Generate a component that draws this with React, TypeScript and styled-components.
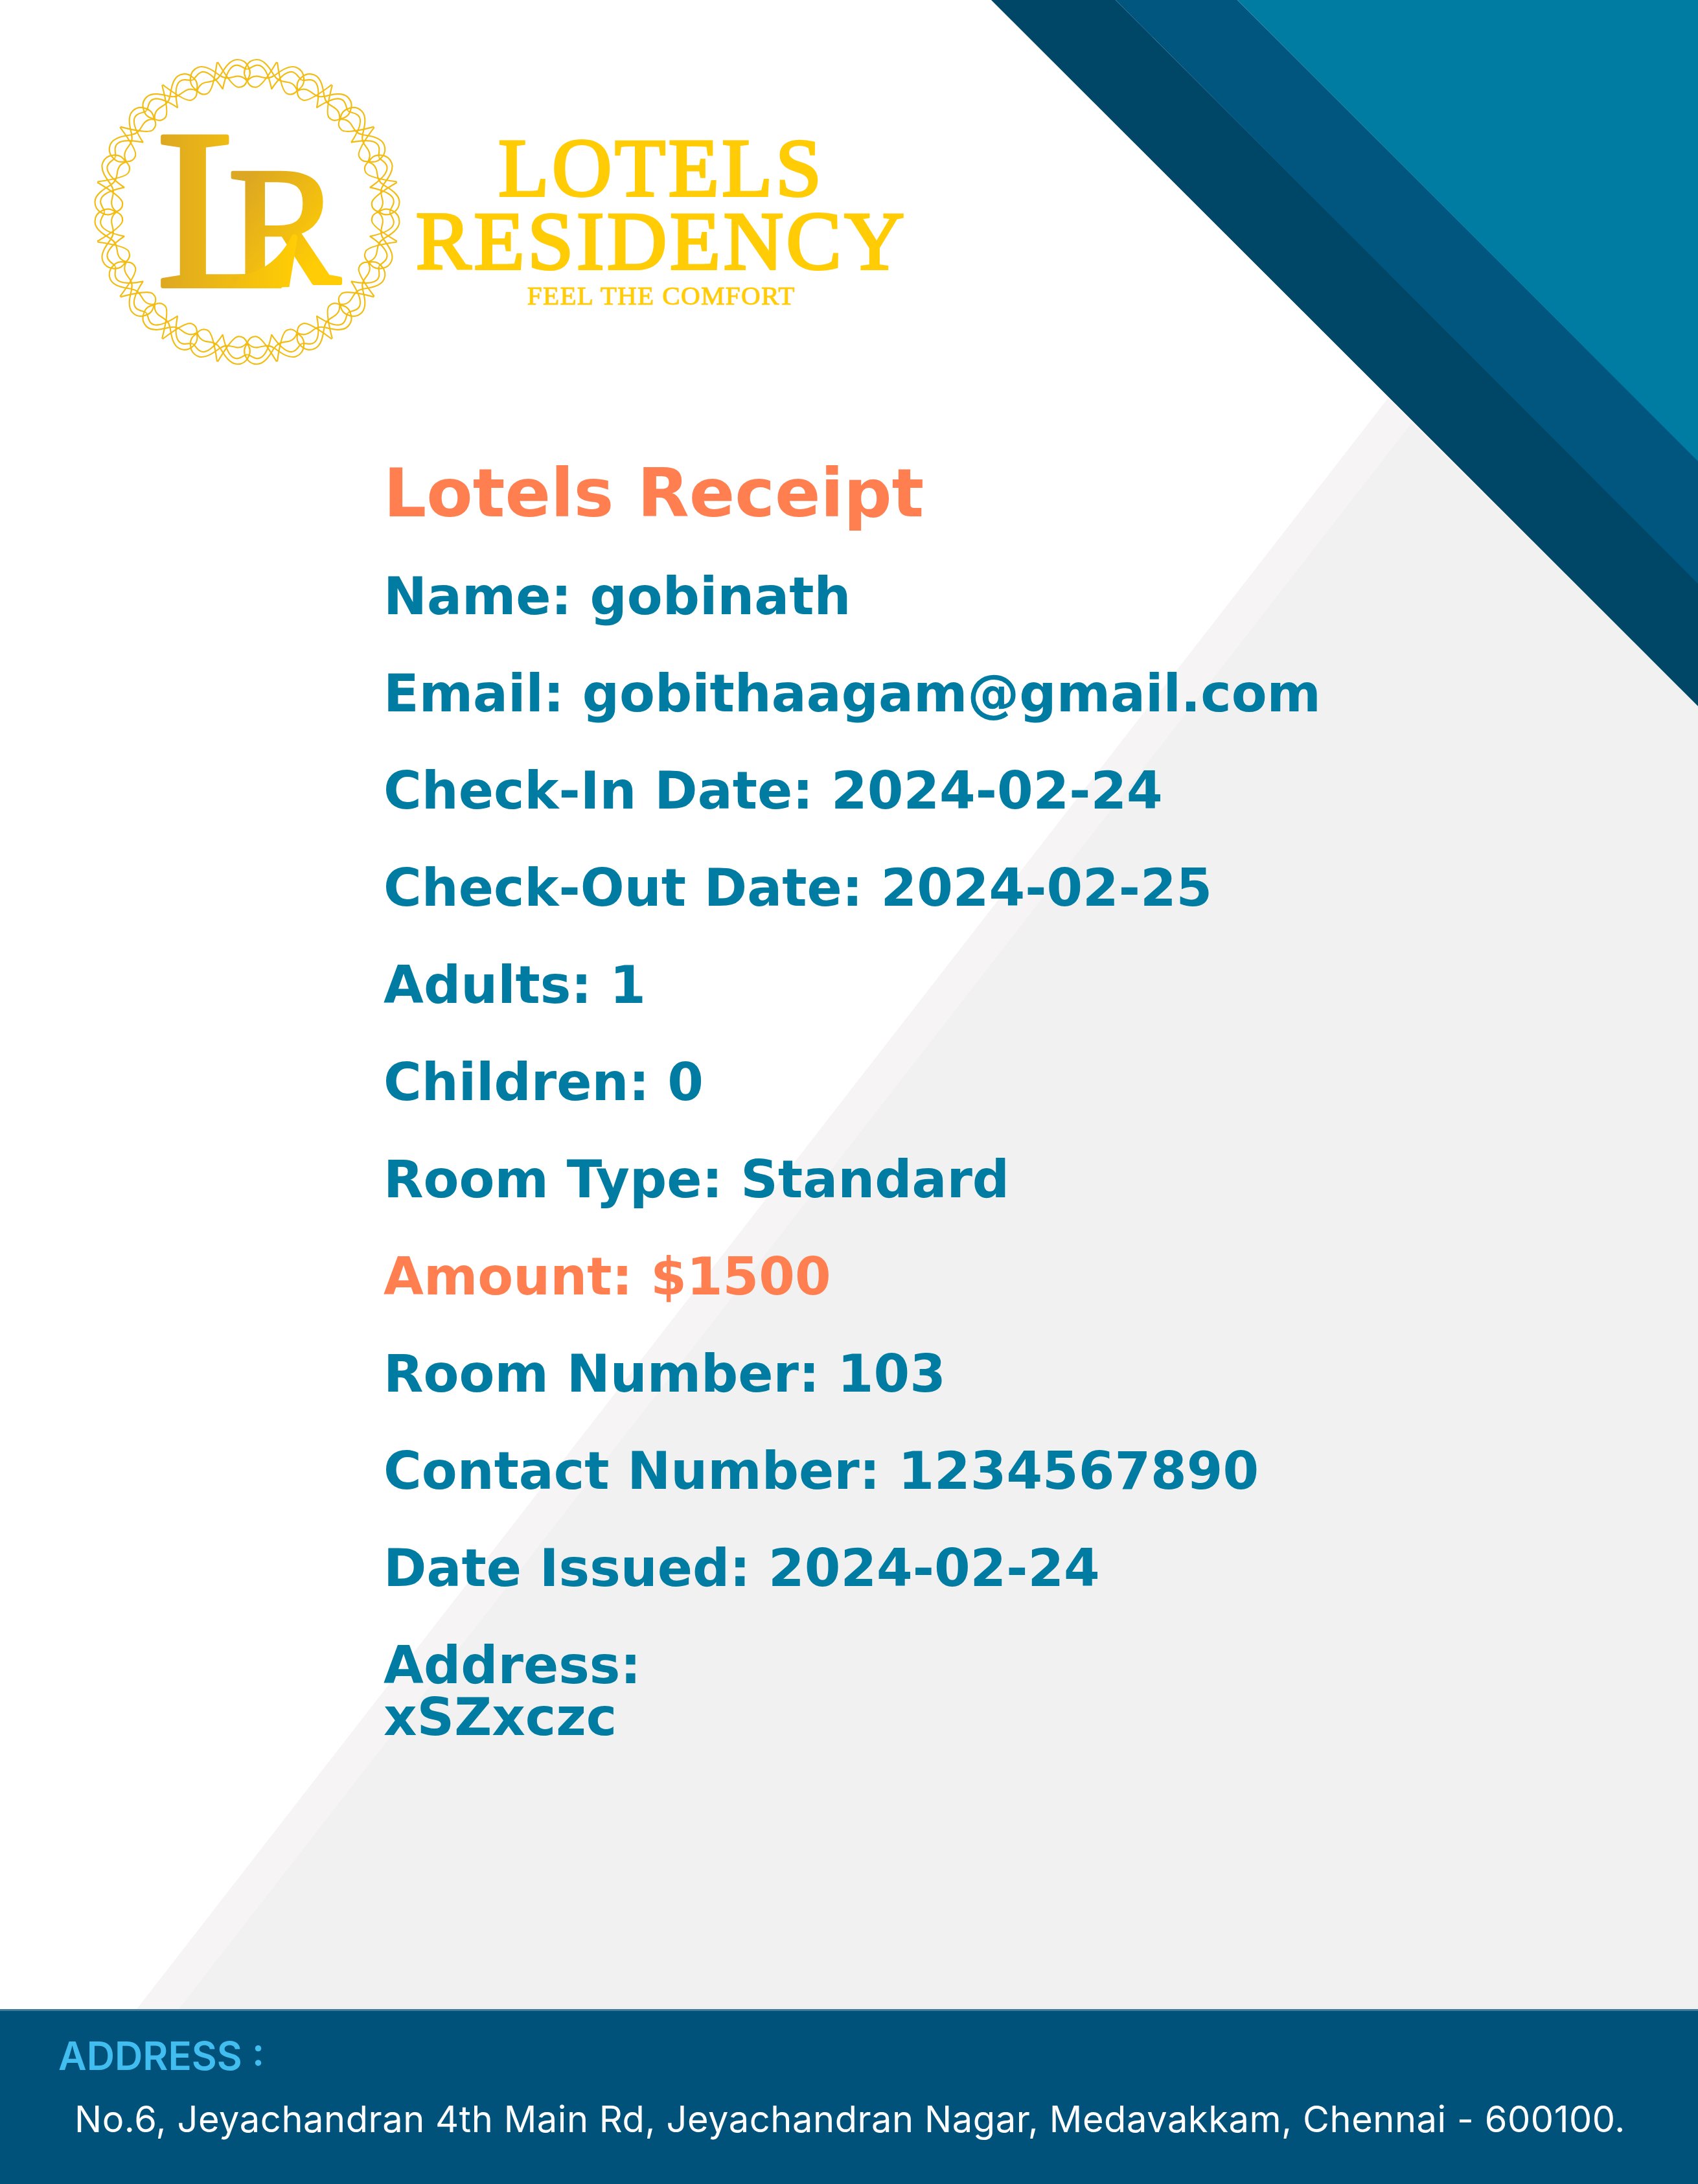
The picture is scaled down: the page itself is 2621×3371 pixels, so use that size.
import React from "react";
import styled, { createGlobalStyle } from "styled-components";

const GlobalStyle = createGlobalStyle`
  html, body {
    margin: 0;
    padding: 0;
    background: #fff;
  }
`;

const Page = styled.div`
  position: relative;
  width: 2621px;
  height: 3371px;
  overflow: hidden;
  display: flex;
  flex-direction: column;
  background: #fff;
`;

const Backdrop = styled.svg`
  position: absolute;
  top: 0;
  left: 0;
`;

const Header = styled.header`
  position: relative;
  display: flex;
  align-items: flex-start;
  gap: 20px;
  padding: 87px 0 0 141px;
`;

const Wordmark = styled.div`
  width: 758px;
  margin-top: 116px;
  display: flex;
  flex-direction: column;
  align-items: center;
  color: #ffcc05;
  font-family: "Liberation Serif", serif;
`;

const WordmarkLine = styled.div`
  font-size: 128px;
  line-height: 113px;
  letter-spacing: 4.5px;
  -webkit-text-stroke: 4px #ffcc05;
`;

const Tagline = styled.div`
  font-size: 41px;
  line-height: 54px;
  letter-spacing: 1.4px;
  -webkit-text-stroke: 1px #ffcc05;
`;

const Receipt = styled.main`
  position: relative;
  margin: 134px 0 0 592px;
  display: flex;
  flex-direction: column;
  gap: 70px;
  font-family: "DejaVu Sans", sans-serif;
  font-weight: 700;
`;

const Title = styled.h1`
  margin: 0 0 -10px;
  font-size: 104px;
  line-height: 120px;
  color: #ff7f50;
`;

const Row = styled.p<{ $accent?: boolean }>`
  margin: 0;
  font-size: 80px;
  line-height: 80px;
  color: ${(p) => (p.$accent ? "#ff7f50" : "#007ba1")};
`;

const Footer = styled.footer`
  position: relative;
  margin-top: auto;
  height: 270px;
  box-sizing: border-box;
  border-top: 3px solid #3f7a98;
  background: #00527a;
  font-family: Inter, sans-serif;
  padding: 34px 0 0 90px;
`;

const FooterLabel = styled.div`
  font-size: 60px;
  line-height: 70px;
  font-weight: 600;
  color: #41bdf0;
`;

const FooterText = styled.div`
  margin: 28px 0 0 25px;
  font-size: 56px;
  line-height: 70px;
  letter-spacing: 0.55px;
  color: #fff;
`;

const rows: { text: React.ReactNode; accent?: boolean }[] = [
  { text: "Name: gobinath" },
  { text: "Email: gobithaagam@gmail.com" },
  { text: "Check-In Date: 2024-02-24" },
  { text: "Check-Out Date: 2024-02-25" },
  { text: "Adults: 1" },
  { text: "Children: 0" },
  { text: "Room Type: Standard" },
  { text: "Amount: $1500", accent: true },
  { text: "Room Number: 103" },
  { text: "Contact Number: 1234567890" },
  { text: "Date Issued: 2024-02-24" },
  {
    text: (
      <>
        Address:
        <br />
        xSZxczc
      </>
    ),
  },
];

const Background = () => (
  <Backdrop width="2621" height="3371" viewBox="0 0 2621 3371">
    <polygon points="2143,614 2621,1089 2621,3101 211,3101" fill="#f6f4f4" />
    <polygon points="2179,653 2621,1089 2621,3101 276,3101" fill="#f1f1f1" />
    <polygon points="1530,0 2621,1090 2621,899 1722,0" fill="#004666" />
    <polygon points="1722,0 2621,901 2621,711 1910,0" fill="#00567e" />
    <polygon points="1910,0 2621,0 2621,712" fill="#007ba1" />
  </Backdrop>
);

const ringAngles = Array.from({ length: 16 }, (_, i) => i * 22.5);

// one half period of the ring, traced at the top of the seal (3x coords)
const RingStrands = () => (
  <g fill="none" strokeWidth="6.5">
    <path d="M369.5 95 C350 62 325 21 290 21 C268 21 250 32 240 52 C228 72 228 96 247 118 C257 106 272 96 292 98 C315 100 340 117 369.5 95" />
    <path d="M245 65 C258 65 270 48 292 47 C325 46 345 95 358 158" />
    <path d="M245 118 C250 135 262 150 285 149 C310 148 350 85 381 32" />
  </g>
);

const Seal = () => (
  <svg width="481" height="480" viewBox="-240.5 -240 481 480">
    <defs>
      <linearGradient id="ringGold" gradientUnits="userSpaceOnUse" x1="-240" y1="0" x2="240" y2="0">
        <stop offset="0" stopColor="#dba62a" />
        <stop offset="1" stopColor="#f2bc12" />
      </linearGradient>
      <linearGradient id="letterL" gradientUnits="userSpaceOnUse" x1="-140" y1="0" x2="70" y2="0">
        <stop offset="0" stopColor="#dca722" />
        <stop offset="1" stopColor="#ffcc05" />
      </linearGradient>
      <linearGradient id="letterR" gradientUnits="userSpaceOnUse" x1="-10" y1="-40" x2="120" y2="60">
        <stop offset="0" stopColor="#dca722" />
        <stop offset="1" stopColor="#ffcc05" />
      </linearGradient>
      <clipPath id="letterLFoot">
        <path d="M-170 -150 L-8 -150 L-8 92 L80 92 L80 135 L-170 135 Z" />
      </clipPath>
    </defs>
    <g stroke="url(#ringGold)">
      {ringAngles.map((a) => (
        <g key={a} transform={`rotate(${a})`}>
          <g transform="scale(0.3333) translate(-244.5 -726)">
            <RingStrands />
          </g>
          <g transform="scale(-0.3333 0.3333) translate(-244.5 -726)">
            <RingStrands />
          </g>
        </g>
      ))}
    </g>
    <g fontFamily="'Liberation Serif', serif" strokeLinejoin="round">
      <g clipPath="url(#letterLFoot)">
        <text x="-140" y="114.5" fontSize="352" fill="url(#letterL)" stroke="url(#letterL)" strokeWidth="7">
          L
        </text>
      </g>
      <text x="-29.4" y="110" fontSize="260" fill="url(#letterR)" stroke="url(#letterR)" strokeWidth="6">
        R
      </text>
    </g>
    <path d="M-10 98 C22 94 52 72 70 35 Q75 33 78 38 L65 116 L-20 118 Z" fill="url(#letterL)" />
  </svg>
);

export default function App() {
  return (
    <Page>
      <GlobalStyle />
      <Background />
      <Header>
        <Seal />
        <Wordmark>
          <WordmarkLine>LOTELS</WordmarkLine>
          <WordmarkLine>RESIDENCY</WordmarkLine>
          <Tagline>FEEL THE COMFORT</Tagline>
        </Wordmark>
      </Header>
      <Receipt>
        <Title>Lotels Receipt</Title>
        {rows.map((row, i) => (
          <Row key={i} $accent={row.accent}>
            {row.text}
          </Row>
        ))}
      </Receipt>
      <Footer>
        <FooterLabel>ADDRESS :</FooterLabel>
        <FooterText>
          No.6, Jeyachandran 4th Main Rd, Jeyachandran Nagar, Medavakkam, Chennai - 600100.
        </FooterText>
      </Footer>
    </Page>
  );
}
